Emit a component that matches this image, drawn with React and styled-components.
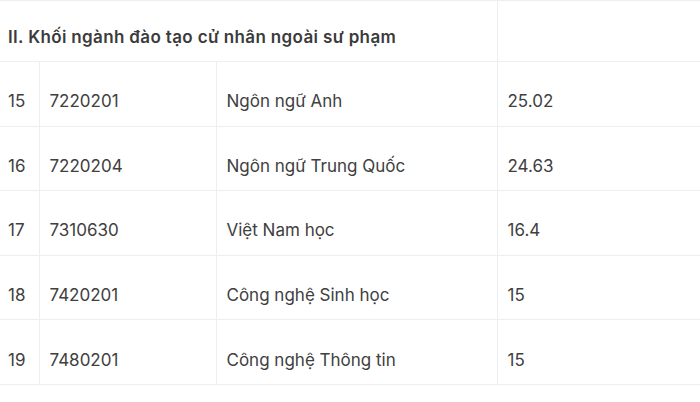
import React from "react";
import styled, { createGlobalStyle } from "styled-components";

const Global = createGlobalStyle`
  html, body { margin: 0; padding: 0; background: #ffffff; }
  body { font-family: Inter, "Open Sans", Arial, sans-serif; color: #3a3a3a; }
`;

const Table = styled.table`
  width: 700px;
  border-collapse: collapse;
  table-layout: fixed;
  border-top: 1px solid #eceef1;
`;

const Col = styled.col`
  width: ${(p) => p.$w}px;
`;

const Cell = styled.td`
  box-sizing: border-box;
  height: ${(p) => (p.$head ? "61px" : "64.6px")};
  padding: ${(p) => (p.$head ? "12px 9px 0" : "15px 10px 0")};
  padding-left: ${(p) => (p.$first ? "8px" : "10px")};
  border-bottom: 1px solid #eceef1;
  border-left: ${(p) => (p.$first ? "none" : "1px solid #eceef1")};
  font-size: 17px;
  font-weight: ${(p) => (p.$head ? 600 : 400)};
  letter-spacing: ${(p) => (p.$head ? "0.35px" : "0")};
  color: ${(p) => (p.$head ? "#3b3b3b" : "#404040")};
  line-height: 24px;
  vertical-align: middle;
  white-space: nowrap;
`;

const rows = [
  ["15", "7220201", "Ngôn ngữ Anh", "25.02"],
  ["16", "7220204", "Ngôn ngữ Trung Quốc", "24.63"],
  ["17", "7310630", "Việt Nam học", "16.4"],
  ["18", "7420201", "Công nghệ Sinh học", "15"],
  ["19", "7480201", "Công nghệ Thông tin", "15"],
];

export default function App() {
  return (
    <>
      <Global />
      <Table>
        <colgroup>
          <Col $w={39} />
          <Col $w={177} />
          <Col $w={281} />
          <Col $w={203} />
        </colgroup>
        <tbody>
          <tr>
            <Cell $head $first colSpan={3}>
              II. Khối ngành đào tạo cử nhân ngoài sư phạm
            </Cell>
            <Cell $head></Cell>
          </tr>
          {rows.map((r) => (
            <tr key={r[0]}>
              <Cell $first>{r[0]}</Cell>
              <Cell>{r[1]}</Cell>
              <Cell>{r[2]}</Cell>
              <Cell>{r[3]}</Cell>
            </tr>
          ))}
        </tbody>
      </Table>
    </>
  );
}
